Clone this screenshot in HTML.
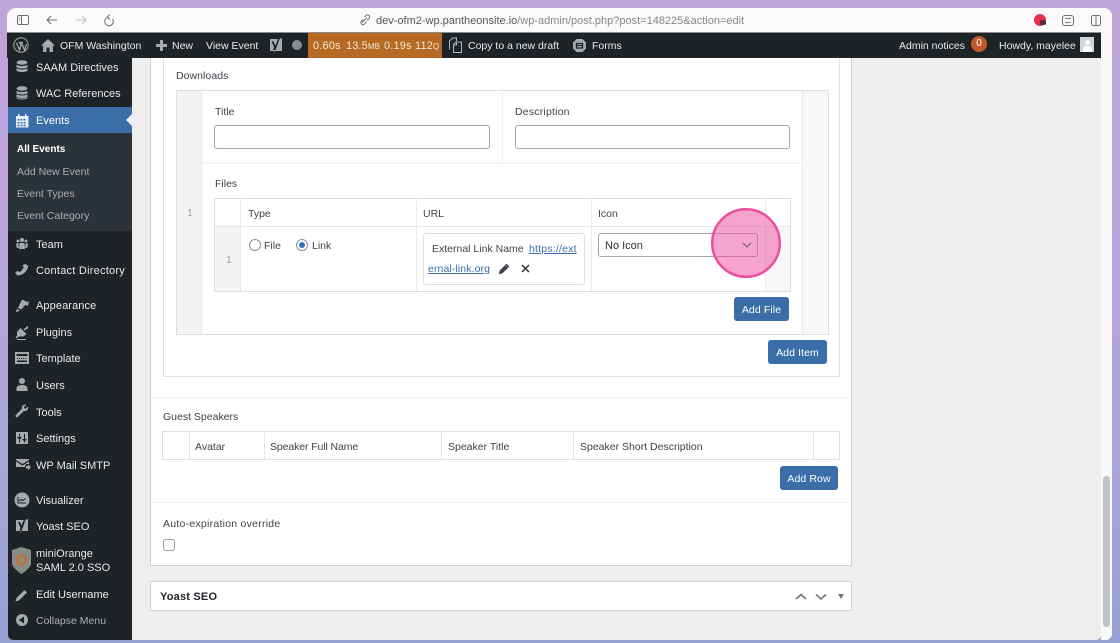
<!DOCTYPE html>
<html><head><meta charset="utf-8"><title>Edit Event</title>
<style>
html,body{margin:0;padding:0;width:1120px;height:643px;overflow:hidden;background:#a9a5d8}
body{position:relative;font-family:"Liberation Sans",sans-serif;font-size:11px;color:#3c434a}
#bg{position:absolute;inset:0;background:linear-gradient(180deg,#bea5da 0%,#b8a4da 40%,#a5a5d6 80%,#94a0d1 100%)}
#win{position:absolute;left:8px;top:8px;width:1093px;height:632px;background:#eee;border-radius:9px 9px 5px 5px;overflow:hidden}
#rs{position:absolute;left:1101px;top:8px;width:11px;height:632px;background:#f8f8f8;border-radius:0 8px 6px 0}
.a{position:absolute;white-space:nowrap}
.b{position:absolute;box-sizing:border-box}
.t{color:#e8eaeb;font-size:10.5px;line-height:14px;margin-top:1px}
.m{color:#e8eaeb;font-size:11px;line-height:14px;margin-top:1px}
.s{font-size:10.5px;color:#a9aeb3;line-height:14px;margin-top:1px}
.l{font-size:10.5px;line-height:14px;color:#3c434a;margin-top:1px}
.btn{position:absolute;box-sizing:border-box;height:24px;background:#3a6ea9;border-radius:3px;color:#fff;font-size:10.5px;letter-spacing:.1px;line-height:26px;text-align:center}
.inp{position:absolute;box-sizing:border-box;height:24px;background:#fff;border:1px solid #a5a6a9;border-radius:3px}
svg{position:absolute;overflow:visible}
a{color:#3a6ea9;text-decoration:underline}
</style></head><body>
<div id="bg"></div>
<div id="rs"></div>
<div id="win"></div>

<!-- browser toolbar -->
<div class="b" style="left:7px;top:8px;width:1105px;height:24px;background:#fafafa;border-radius:9px 9px 0 0"></div>
<svg style="left:0;top:0" width="1120" height="32" fill="none" stroke="#6e6e70" stroke-width="1">
<rect x="17.500" y="15.500" width="11" height="9" rx="1.500"/><path d="M21.500 15.500v9M19 18h1M19 20h1"/>
<path d="M57 20H47M51 16l-4 4 4 4"/>
<path stroke="#c4c4c6" d="M86 20H76M82 16l4 4-4 4"/>
<path d="M107.500 17.500a4.300 4.300 0 1 0 5 1.500M110 14.500l-2.500 2.500 2.500 2.500"/>
<path d="M362 22.500l4.500-4.500M364.500 17l1.500-1.500a2 2 0 0 1 3 3L367 20.500M363 19.500l-1.500 1.500a2 2 0 0 0 3 3l2-2"/>
<rect x="1062.500" y="15.500" width="11" height="10" rx="2.500"/><path d="M1065 18.500h6M1065 22.500h6M1069 17.500v2M1067 21.500v2" stroke-width=".8"/>
<rect x="1091.500" y="15.500" width="9" height="10" rx="2"/><path d="M1096 15.500v10"/>
</svg>
<div class="b" style="left:1034px;top:14px;width:12px;height:12px;border-radius:6px;background:#e5304e"></div>
<div class="b" style="left:1040px;top:20px;width:6px;height:5px;border-radius:2px;background:#5a2a35"></div>
<div class="a" style="left:376px;top:14px;font-size:11px;line-height:14px;color:#55585c">dev-ofm2-wp.pantheonsite.io<span style="color:#85878b">/wp-admin/post.php?post=148225&amp;action=edit</span></div>

<!-- admin bar -->
<div class="b" style="left:7px;top:32px;width:1094px;height:26px;background:#1d2327"></div>
<div class="b" style="left:7px;top:32px;width:1094px;height:1px;background:#8b8d90"></div>
<div class="b" style="left:308px;top:33px;width:134px;height:25px;background:#b66a24"></div>
<svg style="left:13px;top:37px" width="16" height="16" fill="none" stroke="#a7aaad"><circle cx="8" cy="8" r="7.200" stroke-width="1"/><path d="M3.500 6l3 7 1.500-5-1.200-2.500M5.500 5.500h4.500M8.500 6l3 7 2-6" stroke-width="1.300"/></svg>
<svg style="left:41px;top:39px" width="14" height="13" fill="#a7aaad"><path d="M7 0L0 6.500h2V13h3.500V8.500h3V13H12V6.500h2z"/></svg>
<div class="a t" style="left:60px;top:38px">OFM Washington</div>
<svg style="left:156px;top:40px" width="11" height="11" fill="#a7aaad"><path d="M4 0h3v4h4v3H7v4H4V7H0V4h4z"/></svg>
<div class="a t" style="left:172px;top:38px">New</div>
<div class="a t" style="left:206px;top:38px">View Event</div>
<svg style="left:270px;top:37px" width="14" height="16"><path d="M0 2h9l3-1v13H5l-1 2v-2H0z" fill="#a7aaad"/><path d="M3 4l2.500 4.500L8 2l2-1-4.500 12H3l1-3-2.500-6z" fill="#1d2327"/></svg>
<div class="b" style="left:292px;top:40px;width:10px;height:10px;border-radius:5px;background:#888b8f"></div>
<div class="a" style="left:313px;top:39px;color:#f3e6d6;font-size:11px;line-height:14px;letter-spacing:.15px">0.60s</div>
<div class="a" style="left:346px;top:39px;color:#f3e6d6;font-size:11px;line-height:14px;letter-spacing:.1px">13.5<span style="font-size:8px">MB</span></div>
<div class="a" style="left:384px;top:39px;color:#f3e6d6;font-size:11px;line-height:14px;letter-spacing:.15px">0.19s</div>
<div class="a" style="left:415px;top:39px;color:#f3e6d6;font-size:11px;line-height:14px;letter-spacing:.15px">112<span style="font-size:8px">Q</span></div>
<svg style="left:448px;top:37px" width="15" height="16" fill="none" stroke="#b4b7ba" stroke-width="1"><path d="M1.500 12.500V4l3-3h4v3"/><path d="M5.500 15.500V7.500l2.500-2.500h5.500v10.500zM5.500 8h3V5"/></svg>
<div class="a t" style="left:468px;top:38px">Copy to a new draft</div>
<svg style="left:573px;top:39px" width="13" height="13"><path d="M3.500 0h6L13 3.500v6L9.500 13h-6L0 9.500v-6z" fill="#a7aaad"/><path d="M3.500 4.500h6v4.500h-6z" fill="none" stroke="#1d2327" stroke-width="1.300"/><path d="M3.500 6.500h6" stroke="#1d2327"/></svg>
<div class="a t" style="left:592px;top:38px">Forms</div>
<div class="a t" style="left:899px;top:38px">Admin notices</div>
<div class="b" style="left:971px;top:36px;width:16px;height:16px;border-radius:8px;background:#c1582a;color:#fff;font-size:10px;line-height:15px;text-align:center">0</div>
<div class="a t" style="left:999px;top:38px">Howdy, mayelee</div>
<div class="b" style="left:1080px;top:37px;width:14px;height:15px;background:#d3d4d5"></div>
<div class="b" style="left:1085px;top:40px;width:5px;height:5px;border-radius:3px;background:#fff"></div>
<div class="b" style="left:1083px;top:46px;width:9px;height:6px;background:#fff;border-radius:3px 3px 0 0"></div>

<!-- sidebar -->
<div class="b" style="left:8px;top:58px;width:124px;height:582px;background:#1d2327;border-radius:0 0 0 5px"></div>
<div class="b" style="left:8px;top:107px;width:124px;height:26px;background:#3a6ea9"></div>
<div class="b" style="left:8px;top:133px;width:124px;height:98px;background:#2c3338"></div>
<svg style="left:126px;top:114px" width="6" height="12" fill="#eee"><path d="M6 0L0 6l6 6z"/></svg>

<svg style="left:0;top:0" width="140" height="643" fill="#a7aaad">
<ellipse cx="22" cy="62.500" rx="5.500" ry="2.200"/><path d="M16.500 64.500c1 2 10 2 11 0v2.500c-1 2-10 2-11 0zM16.500 68c1 2 10 2 11 0v2.500c-1 2-10 2-11 0z"/>
<ellipse cx="22" cy="88.500" rx="5.500" ry="2.200"/><path d="M16.500 90.500c1 2 10 2 11 0v2.500c-1 2-10 2-11 0zM16.500 94c1 2 10 2 11 0v2.500c-1 2-10 2-11 0zM16.500 97c1 2 10 2 11 0v1c-1 2-10 2-11 0z"/>
<path fill="#e8eef5" d="M16 116h12.500v11.500H16zM18 114h1.500v2H18zM25 114h1.500v2H25z"/>
<path fill="#3a6ea9" d="M17.500 119h2v1.500h-2zM20.500 119h2v1.500h-2zM23.500 119h2v1.500h-2zM17.500 122h2v1.500h-2zM20.500 122h2v1.500h-2zM23.500 122h2v1.500h-2zM17.500 124.800h2v1.500h-2zM20.500 124.800h2v1.500h-2zM23.500 124.800h2v1.500h-2z"/>
<circle cx="22" cy="240" r="2"/><circle cx="18" cy="241" r="1.500"/><circle cx="26" cy="241" r="1.500"/><path d="M19.500 243h5l.5 6h-6zM16 243.500h2.500l.3 4.500h-2zM25.500 243.500H28l-.8 4.500h-2z"/>
<path d="M25 264l3 1.500c.5 4-4 10-10.500 10L15 272.500l2.500-1.500 2 1c2-.8 4-3.500 4-5.500l-1-1.500z"/>
<path d="M22 299.500l5.500 2.500 1.500-1-1 5-3-1-3.500 4.500-3.500-1.500zM17 309l3 1.500-4.500 2z"/>
<path d="M27.500 326l-4 3.500 1 1 4-2.500zM20.500 328l6 6-3 2.500H19l-2.500 2-1-1 1.500-2v-3.500z"/><path d="M17 339h9v1h-9z"/>
<path d="M15 352h14v12H15z"/><path fill="#1d2327" d="M16.500 354h11v2h-11zM17 358h1v1h-1zM19 358h1v1h-1zM21 358h1v1h-1zM23 358h1v1h-1zM25 358h1v1h-1zM17 360.500h10v1.500H17z"/>
<circle cx="22" cy="381" r="3"/><path d="M16.500 391v-3c0-2 3-3 5.500-3s5.500 1 5.500 3v3z"/>
<path d="M28 406.500c.8 2.500-1 5-4.200 4.500l-6 6c-1.200 1-3-.8-2-2l6-6c-.5-3 2-5 4.500-4.300l-2.500 2.500 1.700 1.700z"/>
<path d="M16 432h12v12H16z"/><path fill="#1d2327" d="M19 434h1v3h1.500v1.500h-1.500v4h-1v-4h-1.500V437H19zM24 434h1v5h1.500v1.500H25v2h-1v-2h-1.500V439H24z"/>
<path d="M16 459h13v1l-6.500 4-6.500-4zM16 461.500l6.500 4 6.500-4v2.500h-3l-1 3H16z"/><path d="M26 466h2v-1.500l3 2.800-3 2.800V468.500h-2z"/>
<circle cx="22" cy="500" r="7.500"/><path fill="none" stroke="#1d2327" stroke-width="1" d="M18 497v6h8M19 501l2-1.500 2 1 2.500-2"/>
<path d="M16 520h9l3-1v12h-7l-1 2v-2h-4z"/><path fill="#1d2327" d="M18 522h2l1.500 3.500 2-5 2-.5-4 11h-2l1-3z"/>
<path fill="#8a8a86" d="M21.500 547l9.500 3v13c0 4-5 8-9.500 11-4.500-3-9.500-7-9.500-11v-13z"/>
<circle cx="21.500" cy="560" r="4.500" fill="none" stroke="#c96c26" stroke-width="1.800"/><circle cx="21.500" cy="560" r="1.300" fill="#9aa52f"/>
<path d="M24.500 590l2.500 2.500-8 8-3.500 1 1-3.500z"/>
<circle cx="22" cy="620" r="6"/><path fill="#1d2327" d="M24 616.500v7L19 620z"/>
</svg>

<div class="a m" style="left:36px;top:60px">SAAM Directives</div>
<div class="a m" style="left:36px;top:86px">WAC References</div>
<div class="a m" style="left:36px;top:113px;color:#fff">Events</div>
<div class="a s" style="left:17px;top:142px;color:#fff;font-weight:bold;font-size:10px">All Events</div>
<div class="a s" style="left:17px;top:164px">Add New Event</div>
<div class="a s" style="left:17px;top:186px">Event Types</div>
<div class="a s" style="left:17px;top:208px">Event Category</div>
<div class="a m" style="left:36px;top:237px">Team</div>
<div class="a m" style="left:36px;top:263px;letter-spacing:.24px">Contact Directory</div>
<div class="a m" style="left:36px;top:298px;letter-spacing:.1px">Appearance</div>
<div class="a m" style="left:36px;top:325px">Plugins</div>
<div class="a m" style="left:36px;top:351px">Template</div>
<div class="a m" style="left:36px;top:378px">Users</div>
<div class="a m" style="left:36px;top:405px">Tools</div>
<div class="a m" style="left:36px;top:431px">Settings</div>
<div class="a m" style="left:36px;top:458px">WP Mail SMTP</div>
<div class="a m" style="left:36px;top:493px">Visualizer</div>
<div class="a m" style="left:36px;top:519px">Yoast SEO</div>
<div class="a m" style="left:36px;top:546px">miniOrange</div>
<div class="a m" style="left:36px;top:560px">SAML 2.0 SSO</div>
<div class="a m" style="left:36px;top:587px">Edit Username</div>
<div class="a s" style="left:36px;top:613px">Collapse Menu</div>

<!-- main box -->
<div class="b" style="left:150px;top:58px;width:702px;height:508px;background:#fff;border:1px solid #d0d0d0;border-top:0"></div>
<div class="b" style="left:163px;top:58px;width:677px;height:319px;border:1px solid #e0e0e1;border-top:0"></div>
<div class="b" style="left:151px;top:397px;width:700px;height:1px;background:#f0f0f1"></div>
<div class="b" style="left:151px;top:502px;width:700px;height:1px;background:#f0f0f1"></div>

<div class="a l" style="left:176px;top:68px;letter-spacing:.05px">Downloads</div>

<!-- repeater -->
<div class="b" style="left:176px;top:90px;width:653px;height:245px;background:#fff;border:1px solid #dedede"></div>
<div class="b" style="left:177px;top:91px;width:25px;height:243px;background:#f4f4f4;border-right:1px solid #e8e8e8"></div>
<div class="b" style="left:802px;top:91px;width:26px;height:243px;background:#f8f8f8;border-left:1px solid #e8e8e8"></div>
<div class="b" style="left:202px;top:162px;width:600px;height:2px;background:#f3f3f3"></div>
<div class="b" style="left:502px;top:91px;width:1px;height:72px;background:#f0f0f0"></div>
<div class="a" style="left:187px;top:206px;color:#9a9da0;font-size:10.5px;line-height:14px">1</div>
<div class="a l" style="left:215px;top:104px">Title</div>
<div class="inp" style="left:214px;top:125px;width:276px"></div>
<div class="a l" style="left:515px;top:104px;letter-spacing:.2px">Description</div>
<div class="inp" style="left:515px;top:125px;width:275px"></div>
<div class="a l" style="left:215px;top:176px">Files</div>

<!-- inner table -->
<div class="b" style="left:214px;top:198px;width:577px;height:94px;background:#fff;border:1px solid #dedede"></div>
<div class="b" style="left:215px;top:226px;width:575px;height:1px;background:#e6e6e6"></div>
<div class="b" style="left:215px;top:227px;width:26px;height:64px;background:#f4f4f4"></div>
<div class="b" style="left:765px;top:227px;width:25px;height:64px;background:#f8f8f8"></div>
<div class="b" style="left:240px;top:199px;width:1px;height:92px;background:#e6e6e6"></div>
<div class="b" style="left:416px;top:199px;width:1px;height:92px;background:#ebebeb"></div>
<div class="b" style="left:591px;top:199px;width:1px;height:92px;background:#ebebeb"></div>
<div class="b" style="left:765px;top:199px;width:1px;height:92px;background:#ebebeb"></div>
<div class="a l" style="left:248px;top:206px">Type</div>
<div class="a l" style="left:423px;top:206px">URL</div>
<div class="a l" style="left:598px;top:206px">Icon</div>
<div class="a" style="left:226px;top:253px;color:#9a9da0;font-size:10.5px;line-height:14px">1</div>
<div class="b" style="left:249px;top:239px;width:12px;height:12px;border-radius:6px;border:1px solid #8c8f94;background:#fff"></div>
<div class="a l" style="left:264px;top:238px">File</div>
<div class="b" style="left:296px;top:239px;width:12px;height:12px;border-radius:6px;border:1px solid #8c8f94;background:#fff"></div>
<div class="b" style="left:299px;top:242px;width:6px;height:6px;border-radius:3px;background:#3a72c4"></div>
<div class="a l" style="left:312px;top:238px">Link</div>
<div class="b" style="left:423px;top:233px;width:162px;height:52px;border:1px solid #dedede;border-radius:3px;background:#fff"></div>
<div class="a l" style="left:432px;top:241px">External Link Name</div>
<div class="a l" style="left:529px;top:241px;letter-spacing:.2px"><a>https://ext</a></div>
<div class="a l" style="left:428px;top:261px;letter-spacing:.1px"><a>ernal-link.org</a></div>
<svg style="left:498px;top:262px" width="13" height="13" fill="#3c434a"><path d="M8.500 1.500l3 3-7 7-4 1 1-4zM7.500 3.500l2 2" stroke="#fff" stroke-width=".4"/></svg>
<svg style="left:521px;top:264px" width="9" height="9" fill="none" stroke="#2c3338" stroke-width="1.500"><path d="M1 1l7 7M8 1l-7 7"/></svg>
<div class="inp" style="left:598px;top:233px;width:160px"></div>
<div class="a" style="left:605px;top:239px;color:#2c3338;font-size:11px;line-height:14px">No Icon</div>

<div class="btn" style="left:734px;top:297px;width:55px">Add File</div>
<div class="btn" style="left:768px;top:340px;width:59px">Add Item</div>

<!-- guest speakers -->
<div class="a l" style="left:163px;top:409px">Guest Speakers</div>
<div class="b" style="left:162px;top:431px;width:678px;height:29px;border:1px solid #dedede;background:#fff"></div>
<div class="b" style="left:189px;top:432px;width:1px;height:27px;background:#e6e6e6"></div>
<div class="b" style="left:264px;top:432px;width:1px;height:27px;background:#e6e6e6"></div>
<div class="b" style="left:441px;top:432px;width:1px;height:27px;background:#e6e6e6"></div>
<div class="b" style="left:573px;top:432px;width:1px;height:27px;background:#e6e6e6"></div>
<div class="b" style="left:813px;top:432px;width:1px;height:27px;background:#e6e6e6"></div>
<div class="a l" style="left:195px;top:439px">Avatar</div>
<div class="a l" style="left:270px;top:439px;letter-spacing:-.1px">Speaker Full Name</div>
<div class="a l" style="left:448px;top:439px">Speaker Title</div>
<div class="a l" style="left:580px;top:439px">Speaker Short Description</div>
<div class="btn" style="left:780px;top:466px;width:58px">Add Row</div>

<div class="a l" style="left:163px;top:516px;letter-spacing:.25px">Auto-expiration override</div>
<div class="b" style="left:163px;top:539px;width:12px;height:12px;border:1px solid #9a9ca0;border-radius:3px;background:#fff"></div>

<!-- yoast box -->
<div class="b" style="left:150px;top:581px;width:702px;height:30px;background:#fff;border:1px solid #d0d0d0"></div>
<div class="a" style="left:160px;top:590px;font-weight:bold;font-size:11px;line-height:14px;color:#1d2327;letter-spacing:.2px">Yoast SEO</div>
<svg style="left:790px;top:590px" width="60" height="14" fill="none" stroke="#72777c" stroke-width="1.700"><path d="M6 9l5-4.500 5 4.500M26 4.500l5 4.500 5-4.500"/><path fill="#72777c" stroke="none" d="M48 4h6l-3 5z"/></svg>

<!-- scrollbar -->
<div class="b" style="left:1103px;top:476px;width:7px;height:151px;border-radius:3.500px;background:#c1c1c1"></div>

<!-- pink click highlight -->
<svg style="left:709px;top:206px" width="74" height="74"><circle cx="37" cy="37" r="33.800" fill="#ee4a9c" fill-opacity=".5" stroke="#ee4a9c" stroke-width="2.400"/></svg>
<svg style="left:742px;top:242px" width="10" height="6" fill="none" stroke="#6a5a66" stroke-width="1"><path d="M1 1l4 4 4-4"/></svg>
</body></html>
